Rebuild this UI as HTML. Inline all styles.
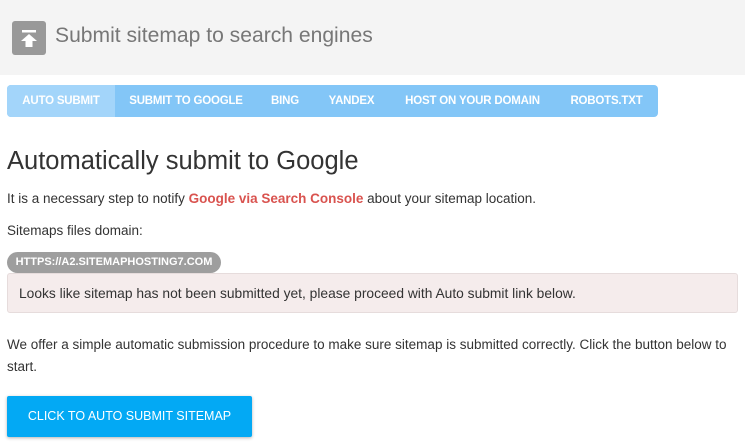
<!DOCTYPE html>
<html><head><style>
body{margin:0;width:745px;height:443px;overflow:hidden;background:#fff;font-family:"Liberation Sans",sans-serif;color:#333}
.hdr{height:75px;background:#f4f4f4;position:relative}
.ico{position:absolute;left:12px;top:21px;width:34px;height:34px;background:#999;border-radius:3px}
.hdr h1{position:absolute;left:55px;top:24px;margin:0;font-weight:normal;font-size:21.1px;color:#777}
.tabs{position:absolute;left:7px;top:85px;width:651px;height:32px;background:#83c6f7;border-radius:4px;overflow:hidden;display:flex}
.tabs div{color:#fff;font-weight:bold;font-size:11.5px;line-height:32px;text-align:center;white-space:nowrap;letter-spacing:-0.2px}
.tabs .a{background:#a3d5fa}
h2{position:absolute;left:7px;top:147px;margin:0;font-weight:normal;font-size:25.5px;color:#333}
.t{position:absolute;left:7px;font-size:13.5px}
.red{color:#d9534f;font-weight:bold}
.pill{position:absolute;left:7px;top:252px;height:21px;width:214px;background:#9e9e9e;border-radius:11px;color:#fff;font-weight:bold;font-size:11px;line-height:21px;text-align:center}
.alert{position:absolute;left:7px;top:273px;height:40px;background:#f5ecec;border:1px solid #e6dcdc;border-radius:3px;font-size:13.8px;line-height:40px;padding-left:11px;box-sizing:border-box;width:731px}
.btn{position:absolute;left:7px;top:396px;width:245px;height:41px;background:#03a9f4;color:#fff;font-size:12.5px;line-height:41px;text-align:center;border-radius:2px;box-shadow:0 1px 3px rgba(0,0,0,.3)}
</style></head><body>
<div class="hdr"><div class="ico"><svg width="34" height="34"><rect x="10" y="9" width="14" height="2.5" fill="#fff"/><path d="M17 13 L25 20 L20.5 20 L20.5 26 L13.5 26 L13.5 20 L9 20 Z" fill="#fff"/></svg></div><h1>Submit sitemap to search engines</h1></div>
<div class="tabs"><div class="a" style="width:108px">AUTO SUBMIT</div><div style="width:142px">SUBMIT TO GOOGLE</div><div style="width:56px">BING</div><div style="width:77px">YANDEX</div><div style="width:165px">HOST ON YOUR DOMAIN</div><div style="width:103px">ROBOTS.TXT</div></div>
<h2>Automatically submit to Google</h2>
<div class="t" style="top:191px">It is a necessary step to notify <span class="red">Google via Search Console</span> about your sitemap location.</div>
<div class="t" style="top:223px">Sitemaps files domain:</div>
<div class="pill">HTTPS://A2.SITEMAPHOSTING7.COM</div>
<div class="alert">Looks like sitemap has not been submitted yet, please proceed with Auto submit link below.</div>
<div class="t" style="top:334px;width:735px;line-height:22px">We offer a simple automatic submission procedure to make sure sitemap is submitted correctly. Click the button below to start.</div>
<div class="btn">CLICK TO AUTO SUBMIT SITEMAP</div>
</body></html>
